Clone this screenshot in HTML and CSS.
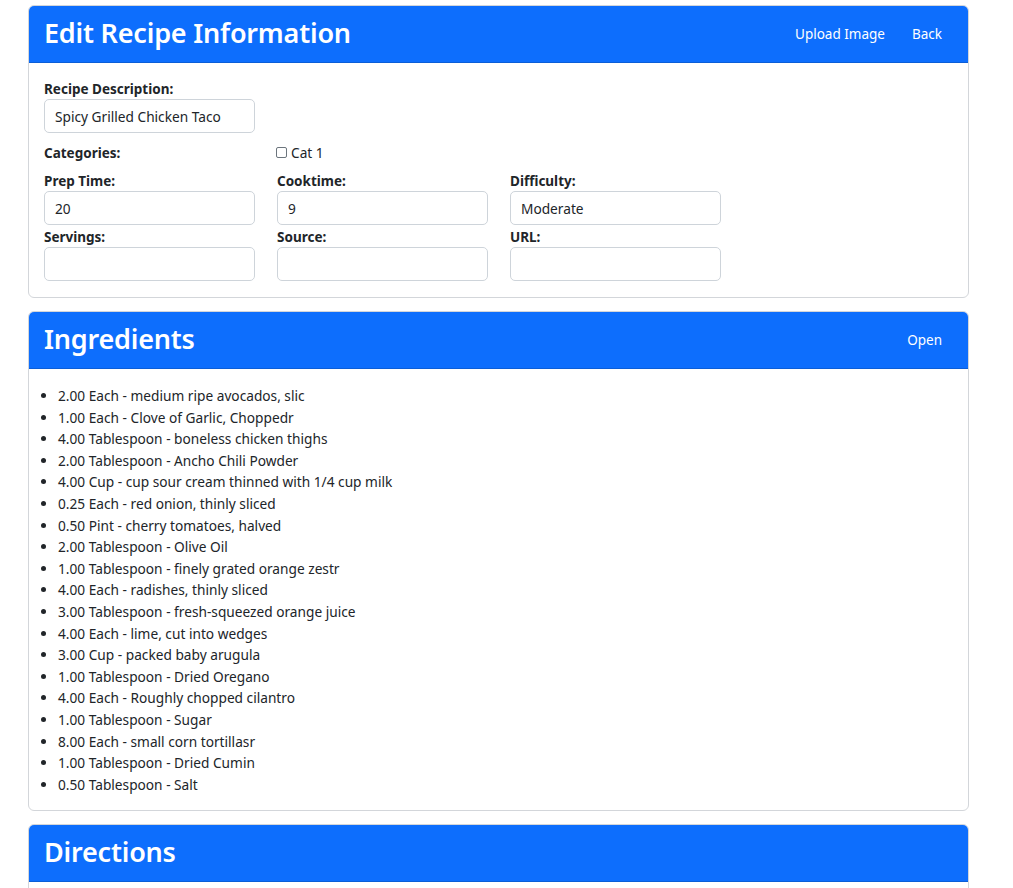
FILE: index.html
```html
<!DOCTYPE html>
<html>
<head>
<meta charset="utf-8">
<link rel="stylesheet" href="styles.css">
</head>
<body>
<div class="page">
  <section class="card">
    <header class="card-header">
      <h2>Edit Recipe Information</h2>
      <nav class="links"><a>Upload Image</a><a>Back</a></nav>
    </header>
    <div class="card-body form">
      <div class="field">
        <label>Recipe Description:</label>
        <div class="input">Spicy Grilled Chicken Taco</div>
      </div>
      <div class="cat-row">
        <label>Categories:</label>
        <span class="check"><span class="box"></span>Cat 1</span>
      </div>
      <div class="grid">
        <div class="field"><label>Prep Time:</label><div class="input">20</div></div>
        <div class="field"><label>Cooktime:</label><div class="input">9</div></div>
        <div class="field"><label>Difficulty:</label><div class="input">Moderate</div></div>
        <div class="field"><label>Servings:</label><div class="input"></div></div>
        <div class="field"><label>Source:</label><div class="input"></div></div>
        <div class="field"><label>URL:</label><div class="input"></div></div>
      </div>
    </div>
  </section>

  <section class="card">
    <header class="card-header">
      <h2>Ingredients</h2>
      <nav class="links"><a>Open</a></nav>
    </header>
    <div class="card-body list-body">
      <ul class="ingredients">
        <li>2.00 Each - medium ripe avocados, slic</li>
        <li>1.00 Each - Clove of Garlic, Choppedr</li>
        <li>4.00 Tablespoon - boneless chicken thighs</li>
        <li>2.00 Tablespoon - Ancho Chili Powder</li>
        <li>4.00 Cup - cup sour cream thinned with 1/4 cup milk</li>
        <li>0.25 Each - red onion, thinly sliced</li>
        <li>0.50 Pint - cherry tomatoes, halved</li>
        <li>2.00 Tablespoon - Olive Oil</li>
        <li>1.00 Tablespoon - finely grated orange zestr</li>
        <li>4.00 Each - radishes, thinly sliced</li>
        <li>3.00 Tablespoon - fresh-squeezed orange juice</li>
        <li>4.00 Each - lime, cut into wedges</li>
        <li>3.00 Cup - packed baby arugula</li>
        <li>1.00 Tablespoon - Dried Oregano</li>
        <li>4.00 Each - Roughly chopped cilantro</li>
        <li>1.00 Tablespoon - Sugar</li>
        <li>8.00 Each - small corn tortillasr</li>
        <li>1.00 Tablespoon - Dried Cumin</li>
        <li>0.50 Tablespoon - Salt</li>
      </ul>
    </div>
  </section>

  <section class="card">
    <header class="card-header">
      <h2>Directions</h2>
    </header>
    <div class="card-body">
      <p class="directions">&nbsp;</p>
    </div>
  </section>
</div>
</body>
</html>
```

FILE: styles.css
```css
html, body {
  margin: 0;
  padding: 0;
  background: #fff;
}
body {
  font-family: "Noto Sans", "Open Sans", sans-serif;
  color: #212529;
  font-size: 13.7px;
}
.page {
  width: 941px;
  padding: 5px 0 0 28px;
  display: flex;
  flex-direction: column;
  gap: 13px;
}
.card {
  border: 1px solid #d3d6da;
  border-radius: 6px;
  overflow: hidden;
  background: #fff;
}
.card-header {
  background: #0d6efd;
  color: #fff;
  border-bottom: 1px solid #0b5ed7;
  display: flex;
  align-items: center;
  justify-content: space-between;
  padding: 0 26px 3px 15px;
  box-sizing: border-box;
  height: 57px;
}
.card-header h2 {
  margin: 0;
  font-size: 27px;
  font-weight: 600;
  letter-spacing: -0.2px;
}
.links {
  display: flex;
  gap: 27px;
  font-size: 13.5px;
  padding-top: 3px;
}
.links a {
  color: #fff;
}
.card-body {
  padding: 17px 15px 16px 15px;
}
.list-body {
  padding: 16px 15px 15px 15px;
}
.form label {
  display: block;
  font-weight: 700;
  font-size: 13.5px;
  line-height: 18px;
}
.field label {
  margin-bottom: 1px;
}
.input {
  border: 1px solid #ced4da;
  border-radius: 5px;
  box-sizing: border-box;
  width: 211px;
  height: 34px;
  padding: 0 10px;
  display: flex;
  align-items: center;
  font-size: 13.7px;
}
.cat-row {
  display: grid;
  grid-template-columns: 232px 1fr;
  margin: 10px 0 10px;
  align-items: center;
}
.check {
  display: flex;
  align-items: center;
  gap: 4px;
  font-size: 13.7px;
}
.box {
  width: 11px;
  height: 11px;
  border: 1px solid #6c757d;
  border-radius: 2px;
  box-sizing: border-box;
}
.grid {
  display: grid;
  grid-template-columns: 211px 211px 211px;
  column-gap: 22px;
  row-gap: 3px;
}
.ingredients {
  margin: 0;
  padding-left: 14px;
  font-size: 13.7px;
  line-height: 21.6px;
}
.directions {
  margin: 0;
}
```
